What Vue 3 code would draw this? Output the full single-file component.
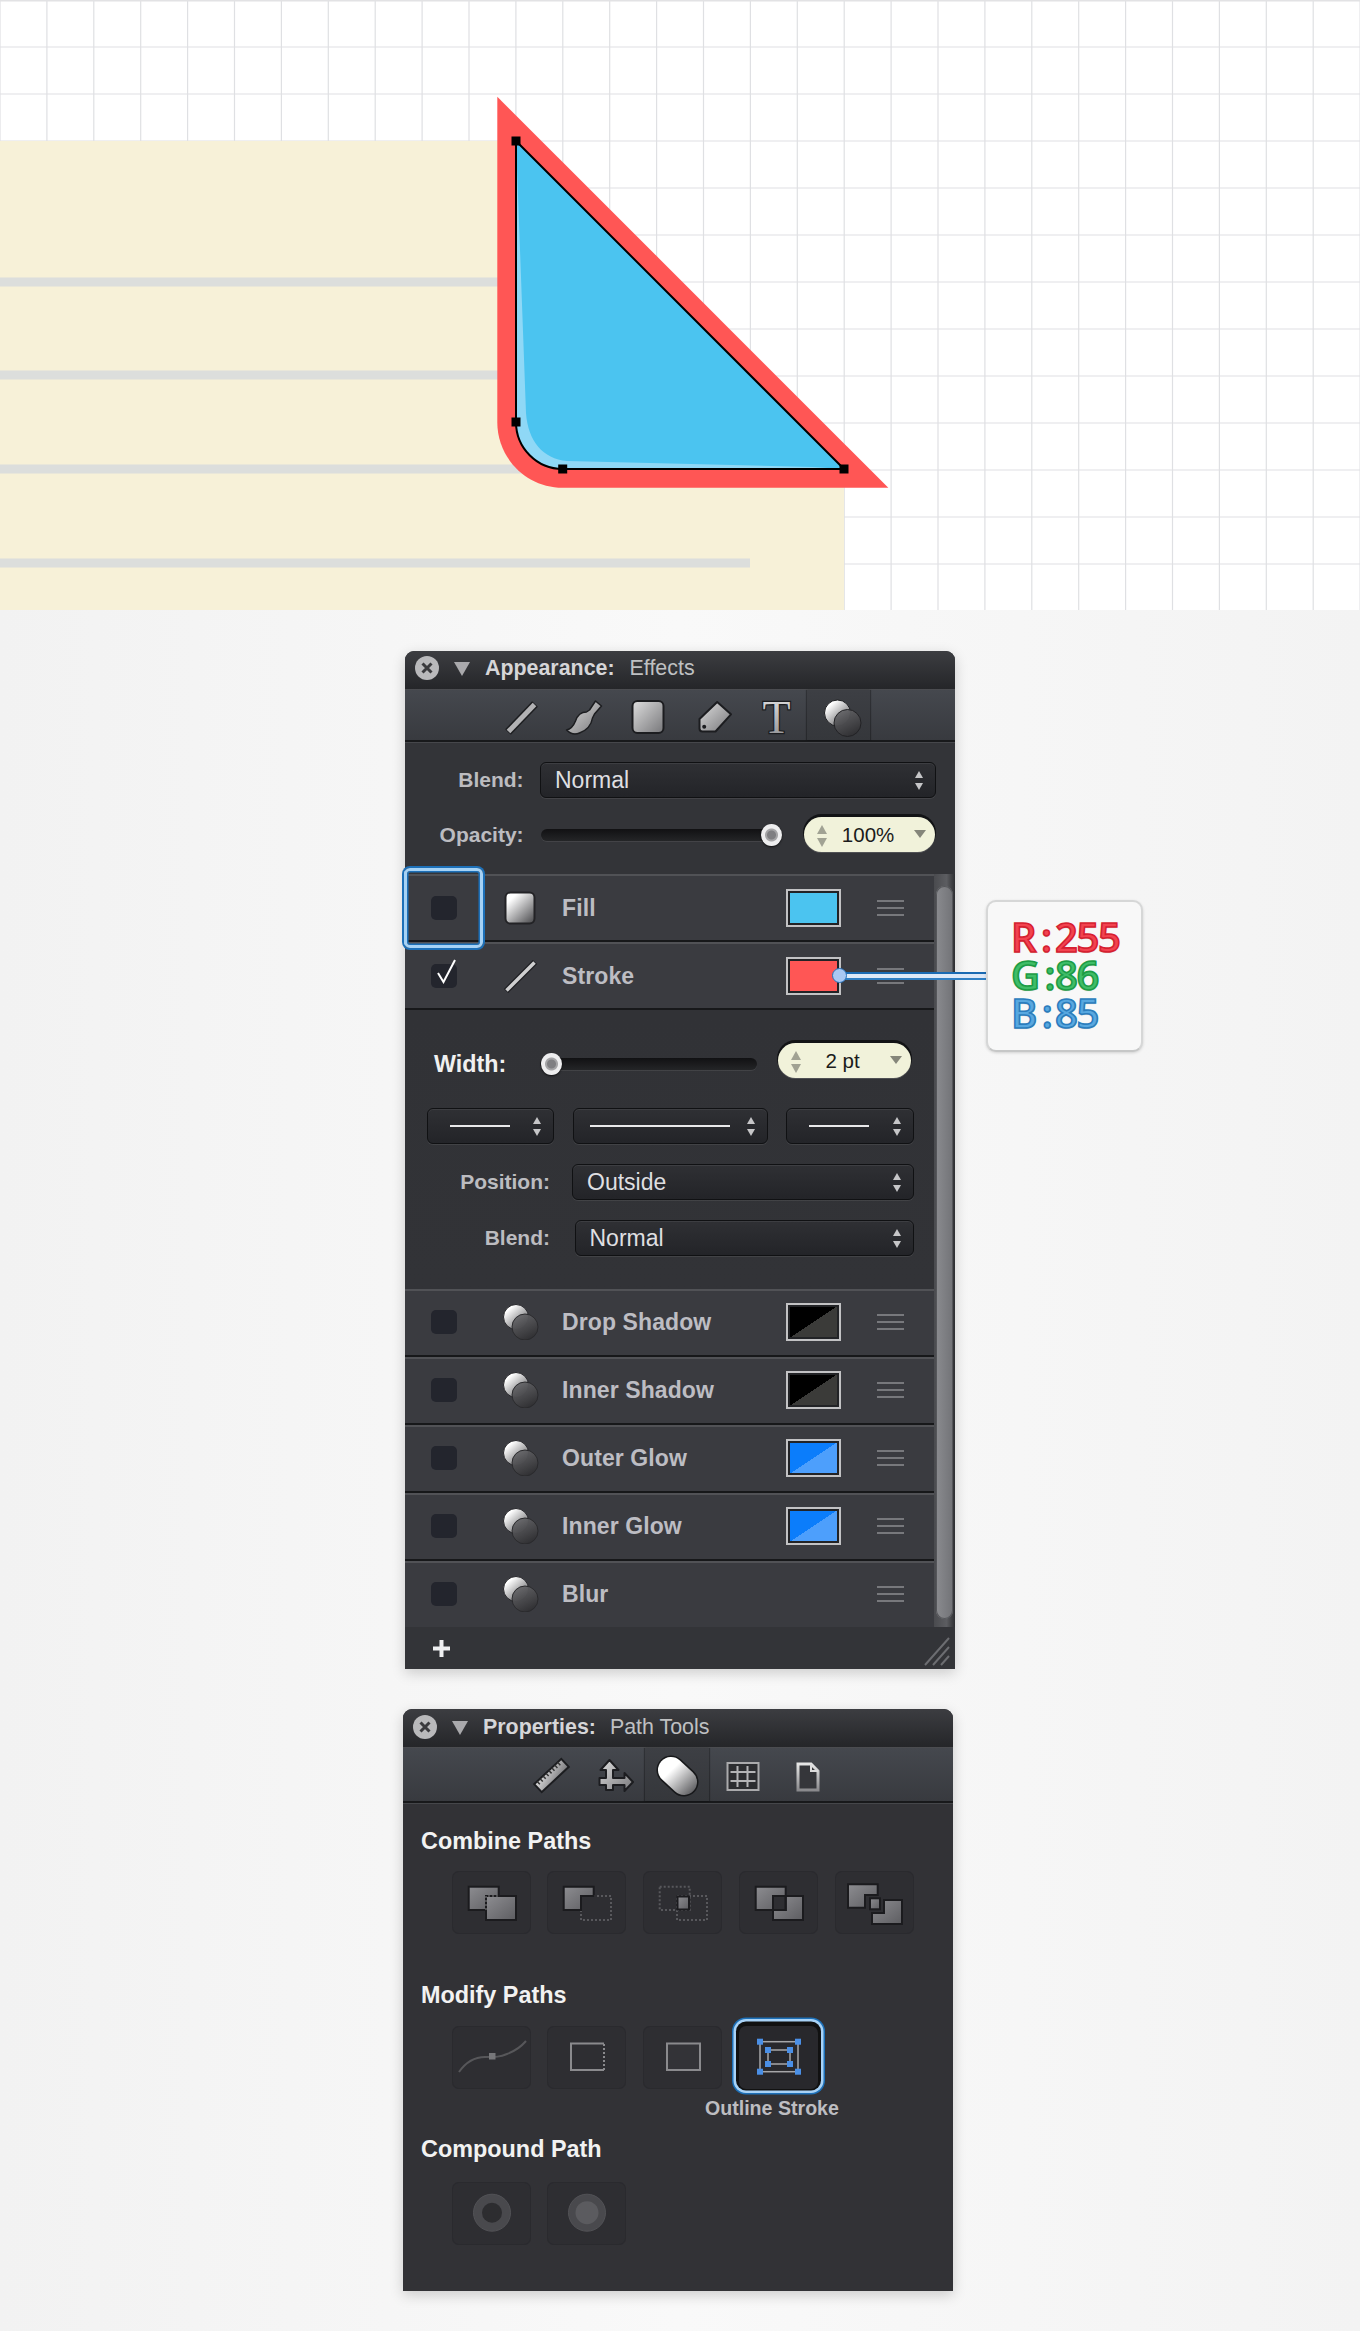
<script setup>
const gridX = Array.from({ length: 30 }, (_, i) => +(46.9 * i).toFixed(1))
const gridY = Array.from({ length: 14 }, (_, i) => 47 * i)
const topRows = [
  { name: 'Fill', icon: 'fill', swatch: 'sw-blue' },
  { name: 'Stroke', icon: 'stroke', swatch: 'sw-red', checked: true }
]
const fxRows = [
  { name: 'Drop Shadow', swatch: 'sw-black' },
  { name: 'Inner Shadow', swatch: 'sw-black' },
  { name: 'Outer Glow', swatch: 'sw-glow' },
  { name: 'Inner Glow', swatch: 'sw-glow' },
  { name: 'Blur', swatch: '' }
]
const handles = [
  [21, 15.7], [59, 15.7], [21, 45.7], [59, 45.7],
  [29, 24], [51, 24], [29, 38], [51, 38]
]
const anchors = [[516, 141], [516, 422], [562.7, 469], [844, 469]]
</script>

<template>
  <div class="page">
    <svg class="defs" width="0" height="0" aria-hidden="true">
      <defs>
        <linearGradient id="metal" x1="0" y1="0" x2="1" y2="1">
          <stop offset="0" stop-color="#dedede" />
          <stop offset="1" stop-color="#77777a" />
        </linearGradient>
        <linearGradient id="whitefade" x1="0.15" y1="0.1" x2="0.9" y2="0.95">
          <stop offset="0.1" stop-color="#ffffff" />
          <stop offset="1" stop-color="#555558" />
        </linearGradient>
        <linearGradient id="capsule" gradientUnits="userSpaceOnUse" x1="662" y1="1760" x2="694" y2="1793">
          <stop offset="0.3" stop-color="#ffffff" />
          <stop offset="1" stop-color="#59595c" />
        </linearGradient>
        <linearGradient id="dull" x1="0" y1="0" x2="1" y2="1">
          <stop offset="0" stop-color="#8d8d91" />
          <stop offset="1" stop-color="#5d5d61" />
        </linearGradient>
        <linearGradient id="vmetal" x1="0" y1="0" x2="0" y2="1">
          <stop offset="0" stop-color="#e6e6e6" />
          <stop offset="1" stop-color="#8a8a8d" />
        </linearGradient>
        <linearGradient id="smoke" x1="0.2" y1="0" x2="0.7" y2="1">
          <stop offset="0" stop-color="#68686b" stop-opacity=".92" />
          <stop offset="1" stop-color="#2e2e31" />
        </linearGradient>
      </defs>
    </svg>

    <svg class="canvas" width="1360" height="610" viewBox="0 0 1360 610">
      <rect width="1360" height="610" fill="#ffffff" />
      <line v-for="x in gridX" :key="'x' + x" :x1="x" :x2="x" y1="0" y2="610" class="grid" />
      <line v-for="y in gridY" :key="'y' + y" x1="0" x2="1360" :y1="y" :y2="y" class="grid" />
      <rect x="0" y="0" width="1360" height="1.5" fill="#e2e2e4" />
      <path d="M0 141H516L844 469V610H0Z" fill="#f7f1d8" />
      <rect x="0" y="277.5" width="520" height="9" fill="#dcdedc" />
      <rect x="0" y="370.5" width="520" height="9" fill="#dcdedc" />
      <rect x="0" y="464.5" width="560" height="9" fill="#dcdedc" />
      <rect x="0" y="558.5" width="750" height="9" fill="#dcdedc" />
      <path d="M497.3 96.7L888.3 487.7H562.7C526.6 487.7 497.3 458.4 497.3 422.3Z" fill="#ff5655" />
      <path d="M516 141L844 469H562.7C536.9 469 516 448 516 422Z" fill="#8fd8f6" />
      <path d="M516 141L844 469L813 467L567 461C543 459 528 441 526 413Z" fill="#4bc4f0" />
      <path d="M516 141L844 469H562.7C536.9 469 516 448 516 422Z" fill="none" stroke="#000" stroke-width="2" />
      <rect v-for="a in anchors" :key="a[0] + '-' + a[1]" :x="a[0] - 4.5" :y="a[1] - 4.5" width="9" height="9" fill="#000" />
    </svg>

    <section class="panel appearance">
      <header class="title">
        <svg class="close" width="24" height="24" viewBox="0 0 24 24">
          <circle cx="12" cy="12" r="12" fill="#b9b9bb" />
          <path d="M7.5 7.5L16.5 16.5M16.5 7.5L7.5 16.5" stroke="#3a3a3d" stroke-width="3" />
        </svg>
        <svg class="tri" width="16" height="14" viewBox="0 0 16 14"><path d="M0 0H16L8 14Z" fill="#a9a9ac" /></svg>
        <b>Appearance:</b><span>Effects</span>
      </header>

      <nav class="toolbar tools-a">
        <div class="cell">
          <svg viewBox="489 689 63.5 52">
            <line x1="508" y1="731" x2="535" y2="703" stroke="#1c1d20" stroke-width="8" />
            <line x1="508.5" y1="730.5" x2="534.5" y2="703.5" stroke="#b2b2b4" stroke-width="5" />
          </svg>
        </div>
        <div class="cell">
          <svg viewBox="552.5 689 63.5 52">
            <path d="M595 700L601 705L594 713L592 717C591 723 587 729 579 732C574 734 569 732 566 729C571 728 573 725 575 720C577 714 581 711 586 711L589 709Z" fill="url(#metal)" stroke="#1c1d20" stroke-width="1.5" stroke-linejoin="round" />
          </svg>
        </div>
        <div class="cell">
          <svg viewBox="616 689 63.5 52"><rect x="632.5" y="700" width="31" height="32" rx="5" fill="url(#metal)" stroke="#1c1d20" stroke-width="2" /></svg>
        </div>
        <div class="cell">
          <svg viewBox="679.5 689 63.5 52">
            <path d="M716.7 701L730.5 713.3L715 730.5H702Q699 730.5 699 727.5V718Z" fill="url(#metal)" stroke="#1c1d20" stroke-width="2" stroke-linejoin="round" />
            <circle cx="703.7" cy="725.7" r="2" fill="#1c1d20" />
          </svg>
        </div>
        <div class="cell">
          <svg viewBox="743 689 63.5 52">
            <text x="762.5" y="732" class="tee" fill="url(#vmetal)" stroke="#1c1d20" stroke-width="2.5">T</text>
          </svg>
        </div>
        <div class="cell active">
          <svg viewBox="806.5 689 63.5 52">
            <circle cx="837" cy="712" r="13" fill="url(#whitefade)" stroke="#1c1d20" />
            <circle cx="847" cy="722" r="13.5" fill="url(#smoke)" stroke="#222225" />
          </svg>
        </div>
      </nav>

      <div class="globals">
        <div class="form-row">
          <label class="lab w-top">Blend:</label>
          <div class="select s-top"><span>Normal</span><i class="arrows"></i></div>
        </div>
        <div class="form-row op">
          <label class="lab w-top">Opacity:</label>
          <div class="slider sl-op"><i class="thumb end"></i></div>
          <div class="pill p-op">
            <i class="spin"></i><span>100%</span><i class="drop"></i>
          </div>
        </div>
      </div>

      <div class="listwrap">
        <div class="list">
          <div v-for="r in topRows" :key="r.name" class="row">
            <div class="cb">
              <svg v-if="r.checked" class="tick" width="22" height="25" viewBox="0 0 22 25">
                <path d="M2 14L7.5 23L19 1" fill="none" stroke="#fff" stroke-width="2" />
              </svg>
            </div>
            <svg class="ricon" width="36" height="36" viewBox="0 0 36 36">
              <rect v-if="r.icon === 'fill'" x="2.5" y="2.5" width="29" height="31" rx="5" fill="url(#whitefade)" stroke="#232326" stroke-width="2" />
              <template v-else>
                <line x1="3" y1="33" x2="32" y2="4" stroke="#1c1d20" stroke-width="6" />
                <line x1="3.5" y1="32.5" x2="31.5" y2="4.5" stroke="#cfcfd0" stroke-width="3.5" />
              </template>
            </svg>
            <span class="rname">{{ r.name }}</span>
            <div class="swatch" :class="r.swatch"></div>
            <div class="ham"><i></i><i></i><i></i></div>
          </div>

          <div class="strokebox">
            <div class="form-row w-row">
              <label class="lab big">Width:</label>
              <div class="slider sl-w"><i class="thumb start"></i></div>
              <div class="pill p-w">
                <i class="spin"></i><span>2 pt</span><i class="drop"></i>
              </div>
            </div>
            <div class="form-row sels">
              <div class="select sm1"><u></u><i class="arrows"></i></div>
              <div class="select sm2"><u></u><i class="arrows"></i></div>
              <div class="select sm3"><u></u><i class="arrows"></i></div>
            </div>
            <div class="form-row pos">
              <label class="lab w-sub">Position:</label>
              <div class="select s-pos"><span>Outside</span><i class="arrows"></i></div>
            </div>
            <div class="form-row pos">
              <label class="lab w-sub">Blend:</label>
              <div class="select s-bl"><span>Normal</span><i class="arrows"></i></div>
            </div>
          </div>

          <div v-for="r in fxRows" :key="r.name" class="row fx">
            <div class="cb"></div>
            <svg class="ricon" width="36" height="36" viewBox="0 0 36 36">
              <circle cx="13" cy="13" r="12.5" fill="url(#whitefade)" stroke="#26262a" />
              <circle cx="22" cy="23" r="13" fill="url(#smoke)" stroke="#2a2a2d" />
            </svg>
            <span class="rname">{{ r.name }}</span>
            <div class="swatch" :class="r.swatch"></div>
            <div class="ham"><i></i><i></i><i></i></div>
          </div>
        </div>
        <div class="scrollbar"><i></i></div>
      </div>

      <footer class="foot">
        <svg width="17" height="17" viewBox="0 0 17 17"><path d="M8.5 0V17M0 8.5H17" stroke="#f0f0f2" stroke-width="4" /></svg>
        <svg class="grip" width="26" height="30" viewBox="0 0 26 30">
          <path d="M1 29L25 2M9 29L25 11M17 29L25 20" stroke="#6c6d71" stroke-width="2" />
        </svg>
      </footer>

      <div class="focus"></div>
      <div class="wire"><i class="dot"></i></div>
      <aside class="callout">
        <div class="rgb r"><span class="k">R:</span><span>255</span></div>
        <div class="rgb g"><span class="k">G:</span><span>86</span></div>
        <div class="rgb b"><span class="k">B:</span><span>85</span></div>
      </aside>
    </section>

    <section class="panel properties">
      <header class="title">
        <svg class="close" width="24" height="24" viewBox="0 0 24 24">
          <circle cx="12" cy="12" r="12" fill="#b9b9bb" />
          <path d="M7.5 7.5L16.5 16.5M16.5 7.5L7.5 16.5" stroke="#3a3a3d" stroke-width="3" />
        </svg>
        <svg class="tri" width="16" height="14" viewBox="0 0 16 14"><path d="M0 0H16L8 14Z" fill="#a9a9ac" /></svg>
        <b>Properties:</b><span>Path Tools</span>
      </header>

      <nav class="toolbar tools-p">
        <div class="cell">
          <svg viewBox="518 1748 63.5 54">
            <g transform="rotate(-43 551.5 1775.5)">
              <rect x="533" y="1770" width="37" height="11" fill="url(#metal)" stroke="#1c1d20" stroke-width="2" />
              <path d="M537 1770v4M541 1770v4M545 1770v4M549 1770v4M553 1770v4M557 1770v4M561 1770v4M565 1770v4" stroke="#333" stroke-width="1.5" />
            </g>
          </svg>
        </div>
        <div class="cell">
          <svg viewBox="581.5 1748 63.5 54">
            <path d="M609 1760L618 1770H612.5V1778H624V1773L632.5 1782L624 1791V1785H612.5V1790H605.5V1785H599V1778H605.5V1770H600Z" fill="url(#metal)" stroke="#1c1d20" stroke-width="2" stroke-linejoin="round" />
          </svg>
        </div>
        <div class="cell active">
          <svg viewBox="645 1748 63.5 54">
            <line x1="671" y1="1770" x2="684" y2="1782" stroke="#17181a" stroke-width="29" stroke-linecap="round" />
            <line x1="671" y1="1770" x2="684" y2="1782" stroke="url(#capsule)" stroke-width="26" stroke-linecap="round" />
          </svg>
        </div>
        <div class="cell">
          <svg viewBox="708.5 1748 63.5 54">
            <rect x="727" y="1763" width="31" height="27" fill="#2c2d30" stroke="#aaaaac" stroke-width="2" />
            <path d="M737 1766V1787M747 1766V1787M730 1772H755M730 1781H755" stroke="#b4b4b6" stroke-width="2" />
          </svg>
        </div>
        <div class="cell">
          <svg viewBox="772 1748 63.5 54">
            <path d="M798 1764H811L818 1771V1790H798Z" fill="#35363a" stroke="url(#vmetal)" stroke-width="3" />
            <path d="M811 1764V1771H818" fill="none" stroke="#dcdcdc" stroke-width="2" />
          </svg>
        </div>
      </nav>

      <div class="pbody">
        <h3>Combine Paths</h3>
        <div class="btns">
          <div class="pbtn">
            <svg viewBox="0 0 79 63">
              <rect x="16.7" y="15.7" width="30" height="23.3" fill="url(#dull)" class="ink" />
              <rect x="34" y="25" width="30" height="24" fill="url(#dull)" class="ink" />
              <path d="M34 39V25H46.7" fill="none" stroke="#4f4f52" stroke-width="2" stroke-dasharray="2 2" />
            </svg>
          </div>
          <div class="pbtn">
            <svg viewBox="0 0 79 63">
              <rect x="34" y="25" width="30" height="24" fill="none" class="dots" />
              <path d="M16.7 15.7H46.7V25H34V39H16.7Z" fill="url(#dull)" class="ink" />
            </svg>
          </div>
          <div class="pbtn">
            <svg viewBox="0 0 79 63">
              <rect x="16.7" y="15.7" width="30" height="23.3" fill="none" class="dots" />
              <rect x="34" y="25" width="30" height="24" fill="none" class="dots" />
              <rect x="34.5" y="25.5" width="11.5" height="13" fill="url(#dull)" class="ink" />
            </svg>
          </div>
          <div class="pbtn">
            <svg viewBox="0 0 79 63">
              <path d="M16.7 15.7H46.7V25H34V39H16.7Z" fill="url(#dull)" class="ink" />
              <path d="M64 25V49H34V39H46.7V25Z" fill="url(#dull)" class="ink" />
              <path d="M34 25H46.7V39H34Z" fill="none" class="ink" />
            </svg>
          </div>
          <div class="pbtn">
            <svg viewBox="0 0 79 63">
              <path d="M13 13.3H42.7V24H30V36.7H13Z" fill="url(#dull)" class="ink" />
              <rect x="35" y="27.3" width="10" height="11" fill="url(#dull)" class="ink" />
              <path d="M67 29V53H37V42H49V29Z" fill="url(#dull)" class="ink" />
            </svg>
          </div>
        </div>

        <h3 class="h-mod">Modify Paths</h3>
        <div class="btns">
          <div class="pbtn">
            <svg viewBox="0 0 79 63">
              <path d="M7 46C14 36 22 31 33 31C44 31 48 31 55 28C63 25 68 22 74 15" fill="none" stroke="#57575a" stroke-width="2" />
              <rect x="37" y="27" width="6.5" height="6.5" fill="#77777a" />
            </svg>
          </div>
          <div class="pbtn">
            <svg viewBox="0 0 79 63">
              <path d="M57 17.5H24V44H57" fill="none" stroke="#8a8a8d" stroke-width="2" />
              <path d="M57 18V44" fill="none" stroke="#8a8a8d" stroke-width="2" stroke-dasharray="2 2" />
            </svg>
          </div>
          <div class="pbtn">
            <svg viewBox="0 0 79 63">
              <rect x="24" y="17.5" width="33" height="26.5" fill="#333337" stroke="#8a8a8d" stroke-width="2" />
            </svg>
          </div>
          <div class="pbtn chosen">
            <svg viewBox="0 0 79 63">
              <rect x="21" y="15.7" width="38" height="30" fill="none" stroke="#a6a6a8" stroke-width="1.5" />
              <rect x="29" y="24" width="22" height="14" fill="none" stroke="#a6a6a8" stroke-width="1.5" />
              <rect v-for="h in handles" :key="h[0] + '-' + h[1]" :x="h[0] - 3" :y="h[1] - 3" width="6" height="6" fill="#4a8fe6" />
            </svg>
            <span class="tip">Outline Stroke</span>
          </div>
        </div>

        <h3 class="h-comp">Compound Path</h3>
        <div class="btns">
          <div class="pbtn">
            <svg viewBox="0 0 79 63">
              <circle cx="40" cy="30.7" r="18.5" fill="#49494d" stroke="#525256" />
              <circle cx="40" cy="30.7" r="10" fill="#2d2d30" />
            </svg>
          </div>
          <div class="pbtn">
            <svg viewBox="0 0 79 63">
              <circle cx="40" cy="30.7" r="18.5" fill="#49494d" stroke="#525256" />
              <circle cx="40" cy="30.7" r="11.5" fill="#5b5b5f" />
            </svg>
          </div>
        </div>
      </div>
    </section>
  </div>
</template>

<style>
body {
  margin: 0;
}
</style>

<style scoped>
.page {
  position: relative;
  width: 1360px;
  height: 2331px;
  overflow: hidden;
  background: linear-gradient(90deg, #f2f2f2, #f9f9f9 50%, #f3f3f3);
  font-family: "Liberation Sans", Arial, sans-serif;
}
.defs {
  position: absolute;
}
.canvas {
  display: block;
}
.grid {
  stroke: #dfe0e3;
  stroke-width: 1.2;
}
.panel {
  position: relative;
  width: 550px;
  box-shadow: 0 4px 14px rgba(0, 0, 0, .18);
  border-radius: 9px 9px 0 0;
}
.appearance {
  margin: 41px 0 0 405px;
  background: #333438;
}
.properties {
  margin: 40px 0 0 403px;
  background: #323236;
}
.title {
  height: 38px;
  box-sizing: border-box;
  padding: 0 0 4px 10px;
  display: flex;
  align-items: center;
  background: linear-gradient(#3c3d41, #252629);
  border-radius: 9px 9px 0 0;
  font-size: 21.4px;
  color: #bfc0c2;
}
.properties .title {
  padding-bottom: 2px;
}
.close {
  margin-right: 14.5px;
}
.tri {
  margin: 2px 15.5px 0 0;
}
.title b {
  color: #d6d6d8;
  margin-right: 15px;
}
.properties .title b {
  margin-right: 14px;
}
.toolbar {
  display: flex;
  background: linear-gradient(#45484e, #383a3f);
  border-top: 1px solid #4b4c50;
  box-sizing: border-box;
  border-bottom: 2px solid #18191b;
}
.tools-a {
  height: 53px;
  padding-left: 84px;
}
.tools-p {
  height: 56px;
  padding-left: 115px;
}
.cell {
  width: 63.5px;
  height: 100%;
}
.cell svg {
  display: block;
  width: 63.5px;
  height: 52px;
  overflow: visible;
}
.tools-p .cell svg {
  height: 54px;
}
.cell.active {
  background: linear-gradient(#3d3f44, #35373b);
  box-shadow: -1px 0 1px rgba(0, 0, 0, .3), 1px 0 1px rgba(0, 0, 0, .3);
}
.tee {
  font-family: "Liberation Serif", serif;
  font-size: 46px;
  paint-order: stroke;
}
.globals {
  padding: 19px 0 22px;
  background: #333438;
  border-top: 1px solid #46474b;
}
.form-row {
  display: flex;
  align-items: center;
}
.form-row.op {
  margin-top: 19px;
}
.lab {
  font-size: 21px;
  font-weight: 700;
  color: #bcbcc0;
  text-align: right;
}
.w-top {
  width: 118.6px;
  margin-right: 16.4px;
}
.select {
  position: relative;
  box-sizing: border-box;
  height: 36px;
  display: flex;
  align-items: center;
  padding-left: 14px;
  border: 1px solid #101113;
  border-radius: 6px;
  background: linear-gradient(#2f3034, #232428);
  box-shadow: 0 1px 0 rgba(255, 255, 255, .08), inset 0 1px 0 rgba(255, 255, 255, .07);
  font-size: 23px;
  color: #dfdfe1;
}
.arrows {
  position: absolute;
  right: 11px;
  top: 7px;
  width: 9px;
  height: 20px;
}
.arrows::before,
.arrows::after {
  content: "";
  position: absolute;
  left: 0;
  border-left: 4.5px solid transparent;
  border-right: 4.5px solid transparent;
}
.arrows::before {
  top: 1px;
  border-bottom: 7px solid #c6c6c8;
}
.arrows::after {
  bottom: 0;
  border-top: 7px solid #c6c6c8;
}
.s-top {
  width: 395.6px;
}
.slider {
  position: relative;
  height: 12px;
  border-radius: 6px;
  background: linear-gradient(#111113, #242527);
  box-shadow: 0 1px 0 rgba(255, 255, 255, .08);
}
.sl-op {
  width: 241px;
  margin-left: 1px;
}
.thumb {
  position: absolute;
  top: -5px;
  width: 21px;
  height: 22px;
  border-radius: 50%;
  background: radial-gradient(circle, #7f7f82 0 4px, #a5a5a7 5px 6px, #eeeeef 7px);
  box-shadow: 0 1px 2px rgba(0, 0, 0, .7);
}
.thumb.end {
  right: 0;
}
.thumb.start {
  left: 1px;
}
.pill {
  position: relative;
  box-sizing: border-box;
  height: 35px;
  display: flex;
  align-items: center;
  justify-content: center;
  background: #f1f2da;
  border-radius: 18px;
  box-shadow: 0 -2px 0 1px #121315, 0 1px 0 rgba(255, 255, 255, .15);
  font-size: 20.5px;
  color: #1b1b1b;
}
.p-op {
  width: 131px;
  margin-left: 21.6px;
  padding-right: 2px;
}
.p-w {
  width: 133px;
  margin-left: 21px;
  padding-right: 4px;
}
.spin {
  position: absolute;
  left: 13px;
  top: 8px;
  width: 11px;
  height: 22px;
}
.spin::before,
.spin::after {
  content: "";
  position: absolute;
  left: 0;
  border-left: 5.5px solid transparent;
  border-right: 5.5px solid transparent;
}
.spin::before {
  top: 0;
  border-bottom: 9px solid #a1a293;
}
.spin::after {
  bottom: 0;
  border-top: 9px solid #a1a293;
}
.drop {
  position: absolute;
  right: 9px;
  top: 13px;
  border-left: 6px solid transparent;
  border-right: 6px solid transparent;
  border-top: 8px solid #85867a;
}
.listwrap {
  display: flex;
}
.list {
  width: 529px;
}
.row {
  box-sizing: border-box;
  height: 68px;
  display: flex;
  align-items: center;
  padding: 0 30px 0 26px;
  background: #3a3b40;
  border-top: 2px solid #515256;
  border-bottom: 2px solid #17181a;
}
.row.fx {
  padding-bottom: 2px;
}
.row.fx:last-child {
  height: 66px;
  border-bottom: 0;
}
.cb {
  position: relative;
  flex: none;
  width: 26px;
  height: 24px;
  margin-right: 46px;
  border-radius: 5px;
  background: #23252d;
}
.tick {
  position: absolute;
  left: 5px;
  top: -5px;
}
.ricon {
  flex: none;
  margin-right: 23px;
}
.rname {
  flex: 1;
  font-size: 23px;
  font-weight: 700;
  letter-spacing: .1px;
  color: #bdbdc3;
}
.swatch {
  flex: none;
  box-sizing: border-box;
  width: 55px;
  height: 38px;
  margin-right: 36px;
}
.sw-blue,
.sw-red,
.sw-black,
.sw-glow {
  border: 2px solid #c2c2c4;
  box-shadow: inset 0 0 0 2px #222326;
}
.sw-blue {
  background: #4bc4f0;
}
.sw-red {
  background: #ff5655;
}
.sw-black {
  background: linear-gradient(to bottom right, #000 50%, #3b3b39 50%);
}
.sw-glow {
  background: linear-gradient(to bottom right, #0b7dfb 50%, #4d9ffc 50%);
}
.ham {
  flex: none;
  width: 27px;
  display: flex;
  flex-direction: column;
  gap: 5px;
}
.ham i {
  height: 2px;
  background: #77787c;
}
.strokebox {
  box-sizing: border-box;
  height: 279px;
  padding-top: 33px;
  background: linear-gradient(#313236, #323337);
}
.w-row {
  padding-left: 29px;
}
.big {
  width: 106px;
  flex: none;
  margin-top: 8px;
  text-align: left;
  font-size: 23.3px;
  color: #f0f0f0;
}
.sl-w {
  width: 217px;
  margin-top: 6px;
}
.sels {
  margin-top: 30px;
  padding-left: 22px;
  gap: 18.5px;
}
.sels u {
  display: block;
  height: 2px;
  background: #e8e8ea;
}
.sm1 {
  width: 127px;
}
.sm1 u {
  width: 60px;
  margin-left: 8px;
}
.sm2 {
  width: 195px;
}
.sm2 u {
  width: 140px;
  margin-left: 2px;
}
.sm3 {
  width: 128px;
}
.sm3 u {
  width: 60px;
  margin-left: 8px;
}
.pos {
  margin-top: 20px;
  padding-left: 22px;
}
.w-sub {
  width: 123px;
}
.s-pos {
  margin-left: 22px;
  width: 342px;
}
.s-bl {
  margin-left: 24.5px;
  width: 339.5px;
}
.scrollbar {
  box-sizing: border-box;
  width: 21px;
  padding: 12px 2px 8px;
  background: linear-gradient(90deg, #4a4b4f, #5c5d61 60%, #2d2e31);
  display: flex;
}
.scrollbar i {
  flex: 1;
  border-radius: 9px;
  background: linear-gradient(90deg, #8a8b8f, #727377);
  box-shadow: inset 0 0 0 1px #55565a;
}
.foot {
  height: 42px;
  box-sizing: border-box;
  display: flex;
  justify-content: space-between;
  align-items: center;
  padding: 0 5px 0 28px;
  background: #333438;
}
.grip {
  align-self: flex-end;
  margin-bottom: 3px;
}
.focus {
  position: absolute;
  left: -1px;
  top: 216.5px;
  box-sizing: border-box;
  width: 79px;
  height: 80px;
  border: 3px solid #a6d2f5;
  border-radius: 6px;
  box-shadow: 0 0 0 2px #1d70b8, inset 0 0 0 1.5px #1d70b8;
}
.wire {
  position: absolute;
  left: 434px;
  top: 321px;
  box-sizing: border-box;
  width: 147px;
  height: 8px;
  background: #dde9f8;
  border-top: 2.5px solid #1a6ab2;
  border-bottom: 2px solid #2f7fc4;
}
.dot {
  position: absolute;
  left: -7.5px;
  top: -6px;
  box-sizing: border-box;
  width: 15px;
  height: 15px;
  border-radius: 50%;
  background: #a9c8f3;
  border: 1.5px solid #2670b8;
}
.callout {
  position: absolute;
  left: 581px;
  top: 249px;
  box-sizing: border-box;
  width: 157px;
  height: 152px;
  padding: 16px 0 0 23px;
  background: #f8f8f8;
  border: 2px solid #d6d7d7;
  border-bottom-color: #c6c7c7;
  border-radius: 10px;
  box-shadow: 0 1px 3px rgba(0, 0, 0, .15);
}
.rgb {
  display: flex;
  height: 38px;
  line-height: 38px;
  font-family: "Open Sans", "Noto Sans", sans-serif;
  font-size: 40px;
  font-weight: 600;
  letter-spacing: -1.4px;
  text-shadow: 0 1px 1px rgba(0, 0, 0, .2);
}
.k {
  width: 44px;
  flex: none;
  letter-spacing: 4.5px;
}
.rgb.r {
  color: #f2434f;
  -webkit-text-stroke: 1.6px #d61f31;
}
.rgb.g {
  color: #3fbd68;
  -webkit-text-stroke: 1.6px #1c9c45;
}
.rgb.b {
  color: #58a8e0;
  -webkit-text-stroke: 1.6px #2b7dbd;
}
.pbody {
  height: 488px;
  box-sizing: border-box;
  padding-top: 24px;
  border-top: 1px solid #45464a;
}
h3 {
  margin: 0 0 17px 18px;
  height: 26px;
  line-height: 26px;
  font-size: 23.4px;
  font-weight: 700;
  color: #f2f2f2;
}
.h-mod {
  margin-top: 48px;
  margin-bottom: 18px;
}
.h-comp {
  margin-top: 47px;
  margin-bottom: 20px;
}
.btns {
  display: flex;
  gap: 16.8px;
  padding-left: 48.6px;
}
.pbtn {
  position: relative;
  box-sizing: border-box;
  width: 79px;
  height: 63px;
  border-radius: 7px;
  background: #2e2e32;
  box-shadow: inset 0 0 0 1px #2a2a2e;
}
.pbtn svg {
  display: block;
  width: 79px;
  height: 63px;
}
.ink {
  stroke: #1b1b1e;
  stroke-width: 2;
}
.dots {
  stroke: #58585c;
  stroke-width: 2;
  stroke-dasharray: 2 2;
}
.chosen {
  background: #28282c;
  box-shadow: 0 -1.5px 0 3px #111, 0 -1.5px 0 5.5px #a8d2f6, 0 -1.5px 0 7px #1d70b8;
}
.tip {
  position: absolute;
  left: -34px;
  top: 71px;
  white-space: nowrap;
  font-size: 19.6px;
  font-weight: 700;
  color: #bdbdc1;
}
</style>
